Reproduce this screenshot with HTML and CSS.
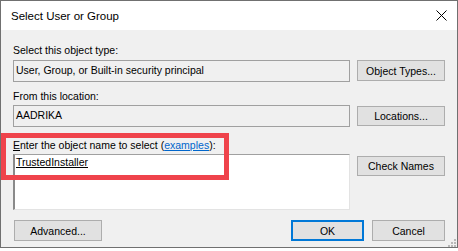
FILE: index.html
```html
<!DOCTYPE html>
<html>
<head>
<meta charset="utf-8">
<link rel="stylesheet" href="styles.css">
</head>
<body>
<div class="window">
  <div class="titlebar">
    <span class="title">Select User or Group</span>
    <svg class="close" width="11" height="11" viewBox="0 0 11 11"><path d="M0.5 0.5 L10.5 10.5 M10.5 0.5 L0.5 10.5" stroke="#000" stroke-width="1" fill="none"/></svg>
  </div>
  <div class="content">
    <div class="label l1">Select this object type:</div>
    <div class="row r1">
      <div class="field">User, Group, or Built-in security principal</div>
      <div class="btn">Object Types...</div>
    </div>
    <div class="label l2">From this location:</div>
    <div class="row r2">
      <div class="field">AADRIKA</div>
      <div class="btn">Locations...</div>
    </div>
    <div class="label l3"><u>E</u>nter the object name to select (<span class="link">examples</span>):</div>
    <div class="row r3">
      <div class="area"><span class="name">TrustedInstaller</span></div>
      <div class="btn check">Check Names</div>
    </div>
    <div class="bottom">
      <div class="btn adv">Advanced...</div>
      <div class="spacer"></div>
      <div class="btn ok">OK</div>
      <div class="btn cancel">Cancel</div>
    </div>
    <svg class="grip" width="9" height="9" viewBox="0 0 9 9">
      <rect x="7" y="1" width="2" height="2" fill="#b8b8b8"/>
      <rect x="4" y="4" width="2" height="2" fill="#b8b8b8"/>
      <rect x="7" y="4" width="2" height="2" fill="#b8b8b8"/>
      <rect x="1" y="7" width="2" height="2" fill="#b8b8b8"/>
      <rect x="4" y="7" width="2" height="2" fill="#b8b8b8"/>
      <rect x="7" y="7" width="2" height="2" fill="#b8b8b8"/>
    </svg>
  </div>
  <div class="highlight"></div>
</div>
</body>
</html>
```
FILE: styles.css
```css
html, body {
  margin: 0;
  padding: 0;
  background: #ffffff;
}
body {
  width: 458px;
  height: 251px;
  overflow: hidden;
  font-family: "Liberation Sans", Arial, sans-serif;
  font-size: 10.5px;
  color: #000;
}
.window {
  position: relative;
  width: 458px;
  height: 248px;
  box-sizing: border-box;
  border: 1px solid #707070;
  background: #f0f0f0;
}
.titlebar {
  height: 29px;
  background: #ffffff;
  display: flex;
  align-items: center;
  padding-left: 10px;
  padding-right: 10px;
}
.title {
  font-size: 11.5px;
  flex: 1;
  padding-top: 1px;
}
.close {
  display: block;
  margin-right: 0;
  margin-top: 0;
}
.content {
  position: relative;
  height: 217px;
  padding: 0 12px;
  display: flex;
  flex-direction: column;
}
.label {
  line-height: 13px;
  height: 13px;
  white-space: nowrap;
}
.l1 { margin-top: 14px; }
.l2 { margin-top: 8px; }
.l3 { margin-top: 12px; }
.row {
  display: grid;
  grid-template-columns: 337px 88px;
  column-gap: 7px;
  align-items: start;
}
.r1 { margin-top: 3px; }
.r2 { margin-top: 2px; }
.r3 { margin-top: 2px; }
.field {
  height: 22px;
  box-sizing: border-box;
  border: 1px solid #a0a0a0;
  padding-left: 2px;
  line-height: 19px;
  white-space: nowrap;
  background: #f0f0f0;
}
.btn {
  height: 21px;
  box-sizing: border-box;
  border: 1px solid #adadad;
  background: #e1e1e1;
  display: flex;
  align-items: center;
  justify-content: center;
  white-space: nowrap;
}
.r2 .btn { margin-top: 1px; height: 20px; }
.area {
  height: 56px;
  box-sizing: border-box;
  background: #ffffff;
  border-top: 1px solid #a0a0a0;
  border-left: 2px solid #8a8a8a;
  border-right: 1px solid #e3e3e3;
  border-bottom: 1px solid #e3e3e3;
  padding: 1px 0 0 1px;
  line-height: 13px;
}
.name {
  text-decoration: underline;
  text-underline-offset: 1px;
}
.check { margin-top: 2px; height: 20px; }
.link {
  color: #0066cc;
  text-decoration: underline;
}
.bottom {
  margin-top: 10px;
  display: flex;
  align-items: start;
  gap: 8px;
}
.adv {
  width: 88px;
  margin-left: 1px;
}
.spacer { flex: 1; }
.ok, .cancel { width: 73px; }
.ok {
  border: 2px solid #0078d7;
}
.grip {
  position: absolute;
  right: 1px;
  bottom: 0px;
}
.highlight {
  position: absolute;
  left: 0px;
  top: 132px;
  width: 228px;
  height: 47px;
  box-sizing: border-box;
  border: 5px solid #ef434b;
}
```
